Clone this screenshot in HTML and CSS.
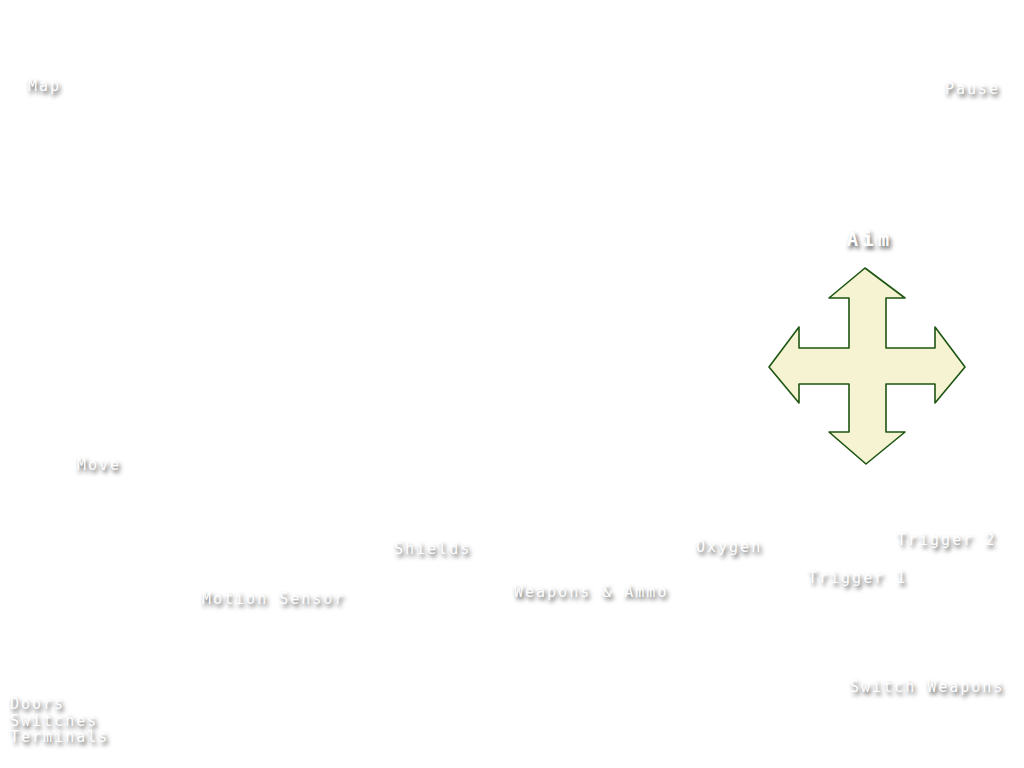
FILE: index.html
```html
<!DOCTYPE html>
<html lang="en">

<head>
  <meta charset="UTF-8">
  <meta name="viewport" content="width=device-width, initial-scale=1.0">
  <title>Controls</title>

  <link rel="stylesheet" href="styles.css">
</head>

<body>
  <div class="stage">
    <span class="label map">Map</span>
    <span class="label pause">Pause</span>

    <div class="aim">
      <span class="aim-title">Aim</span>
      <svg class="aim-arrow" width="200" height="200" viewBox="0 0 200 200">
        <path d="M97 1 L137 31 L118 31 L118 81 L167 81 L167 60 L197 100 L167 136 L167 117 L118 117 L118 165 L137 165 L98 197 L61 165 L81 165 L81 117 L31 117 L31 136 L1 100 L31 60 L31 81 L81 81 L81 31 L61 31 Z" />
      </svg>
    </div>

    <span class="label move">Move</span>
    <span class="label shields">Shields</span>
    <span class="label oxygen">Oxygen</span>
    <span class="label trigger-2">Trigger 2</span>
    <span class="label trigger-1">Trigger 1</span>
    <span class="label motion">Motion Sensor</span>
    <span class="label weapons">Weapons &amp; Ammo</span>
    <span class="label switch">Switch Weapons</span>
    <span class="label action">Doors<br>Switches<br>Terminals</span>
  </div>
</body>

</html>
```

FILE: styles.css
```css
* {
  margin: 0;
  padding: 0;
  box-sizing: border-box;
}

body {
  background-color: #ffffff;
  font-family: "DejaVu Sans Mono", "Liberation Mono", monospace;
}

.stage {
  position: relative;
  width: 1024px;
  height: 768px;
  overflow: hidden;
}

.label {
  position: absolute;
  color: #ffffff;
  font-size: 15px;
  line-height: 16.5px;
  letter-spacing: 2px;
  white-space: nowrap;
  text-shadow: 2px 3px 4px rgba(0, 0, 0, .7);
}

.map { left: 28px; top: 78px; }
.pause { left: 945px; top: 81px; }
.move { left: 77px; top: 457px; }
.shields { left: 394px; top: 541px; }
.oxygen { left: 696px; top: 539px; }
.trigger-2 { left: 897px; top: 532px; }
.trigger-1 { left: 808px; top: 570px; }
.motion { left: 202px; top: 591px; }
.weapons { left: 514px; top: 584px; }
.switch { left: 850px; top: 679px; }
.action { left: 10px; top: 696px; }

.aim {
  position: absolute;
  left: 768px;
  top: 227px;
  width: 200px;
  display: flex;
  flex-direction: column;
  align-items: center;
  gap: 16px;
}

.aim-title {
  color: #ffffff;
  font-size: 19px;
  font-weight: bold;
  line-height: 24px;
  letter-spacing: 4px;
  padding-left: 4px;
  text-shadow: 2px 3px 4px rgba(0, 0, 0, .7);
}

.aim-arrow path {
  fill: #f6f3d3;
  stroke: #1d5511;
  stroke-width: 1.6;
  stroke-linejoin: round;
}
```
